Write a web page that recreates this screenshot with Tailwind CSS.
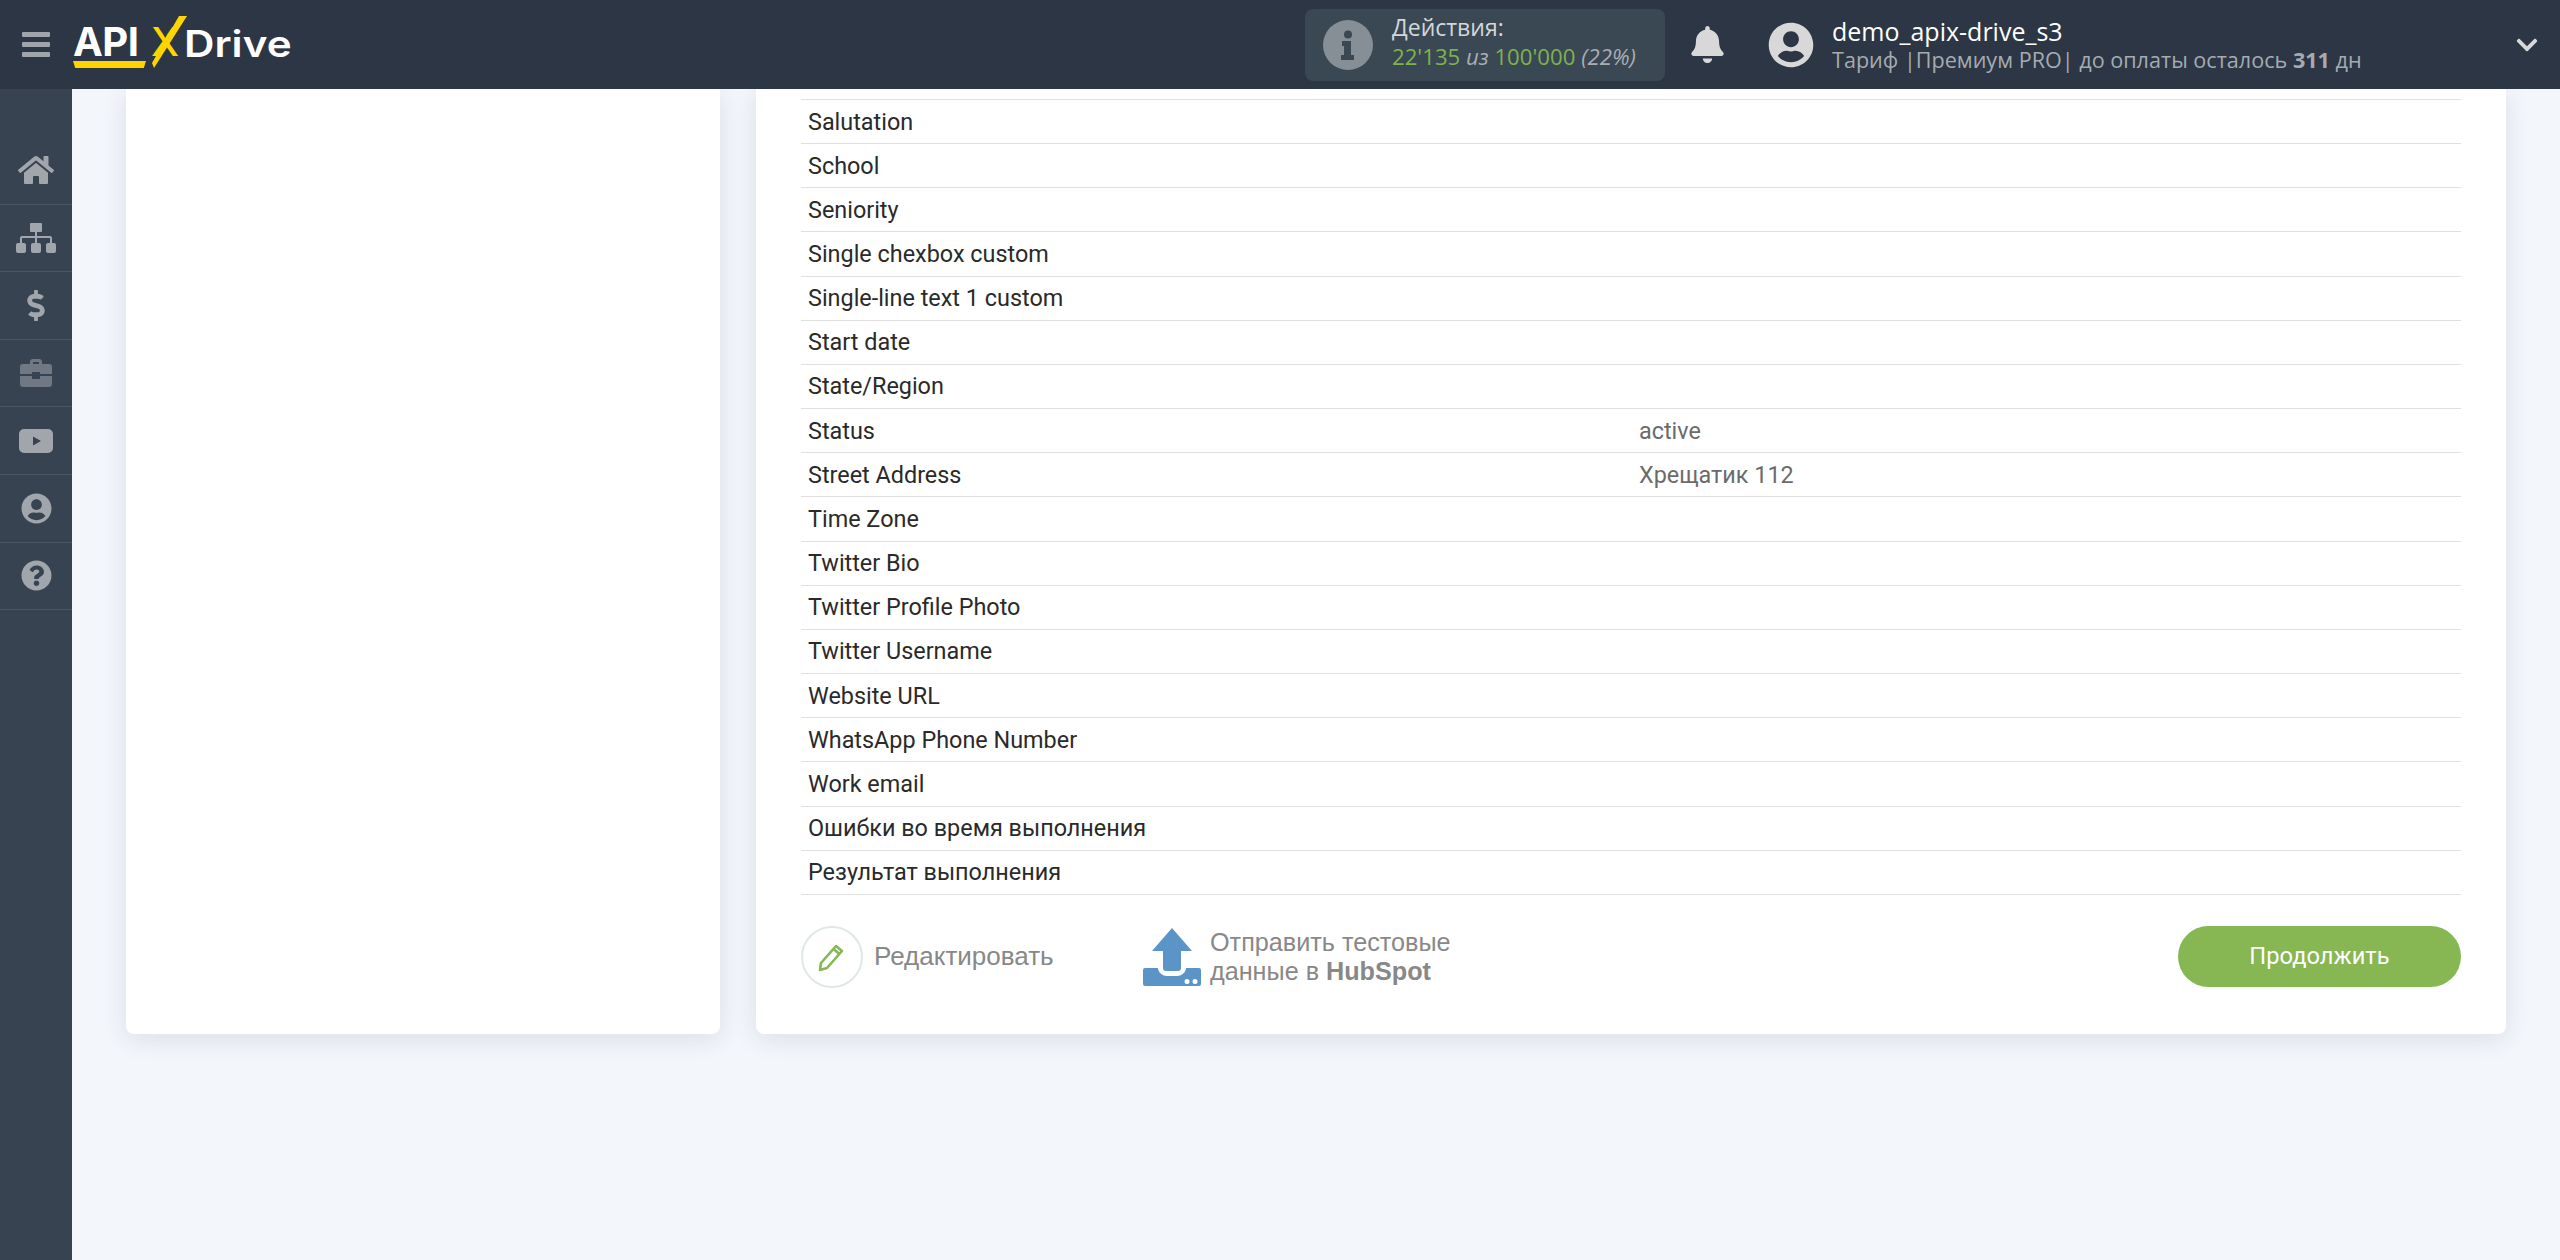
<!DOCTYPE html>
<html lang="en">
<head>
    <meta charset="UTF-8">
    <title>ApiX-Drive</title>
    <script src="https://cdn.jsdelivr.net/npm/@tailwindcss/browser@4"></script>
</head>
<body class="h-screen overflow-hidden flex flex-col bg-[#f3f6fb] font-['Roboto',sans-serif]">
    <!-- Top bar -->
    <header class="h-[89px] shrink-0 bg-[#2c3644] flex items-center relative z-10">
        <div class="w-[73px] shrink-0 pl-[22px] flex flex-col gap-[5px]">
            <span class="block w-[28px] h-[5px] rounded-[1px] bg-[#a0a5ab]"></span>
            <span class="block w-[28px] h-[5px] rounded-[1px] bg-[#a0a5ab]"></span>
            <span class="block w-[28px] h-[5px] rounded-[1px] bg-[#a0a5ab]"></span>
        </div>
        <!-- Logo -->
        <div class="w-[232px] shrink-0 relative h-[89px] font-['Inter',sans-serif] font-bold text-white">
            <span class="absolute left-0 top-[18px] text-[40px] leading-[48px] tracking-[-0.5px]">API</span>
            <span class="absolute left-[78px] top-[18px] text-[40px] leading-[48px] font-medium text-[#ffd400]">X</span>
            <svg class="absolute left-[73px] top-[14px] w-[42px] h-[54px]" viewBox="0 0 42 54" fill="#ffd400"><path d="M33 2h8L8 54l-2-5z"/></svg>
            <span class="absolute left-[111px] top-[22px] text-[37px] leading-[44px] font-semibold origin-left scale-x-[1.14]">Drive</span>
            <span class="absolute left-0 top-[61px] w-[73px] h-[7px] bg-[#ffd400] [clip-path:polygon(0_0,100%_0,97%_100%,3%_100%)]"></span>
        </div>
        <div class="flex-1"></div>
        <!-- Actions counter -->
        <div class="w-[360px] h-[72px] rounded-lg bg-[#3a4854] flex items-center font-['Open_Sans',sans-serif] leading-[29px]">
            <div class="ml-[18px] w-[50px] h-[50px] rounded-full bg-[#868e96] flex items-center justify-center">
                <svg class="w-[14px] h-[30px]" viewBox="0 0 14 30" fill="#3a4854"><circle cx="7" cy="4.5" r="4"/><path d="M1 11h9v14h3v5H0v-5h3v-9H1z"/></svg>
            </div>
            <div class="ml-[19px] pb-[6px]">
                <div class="text-[23px] text-[#d3d7da]">Действия:</div>
                <div class="text-[22.2px] text-[#7fb24d]">22'135 <i class="text-[#a9adb1]">из</i> 100'000 <i class="text-[#a9adb1]">(22%)</i></div>
            </div>
        </div>
        <svg class="w-[33px] h-[37px] ml-[26px]" viewBox="0 0 448 512" fill="#d8d8d8"><path d="M224 512c35.32 0 63.97-28.65 63.97-64H160.03c0 35.35 28.65 64 63.97 64zm215.39-149.71c-19.32-20.76-55.47-51.99-55.47-154.29 0-77.7-54.48-139.9-127.94-155.16V32c0-17.67-14.32-32-31.98-32s-31.98 14.33-31.98 32v20.84C118.56 68.1 64.08 130.3 64.08 208c0 102.3-36.15 133.53-55.47 154.29-6 6.45-8.66 14.16-8.61 21.71.11 16.4 12.98 32 32.1 32h383.8c19.12 0 32-15.6 32.1-32 .05-7.55-2.61-15.27-8.61-21.71z"/></svg>
        <svg class="w-[46px] h-[46px] ml-[44px]" viewBox="0 0 496 512" fill="#d8d8d8"><path d="M248 8C111 8 0 119 0 256s111 248 248 248 248-111 248-248S385 8 248 8zm0 96c48.6 0 88 39.4 88 88s-39.4 88-88 88-88-39.4-88-88 39.4-88 88-88zm0 344c-58.7 0-111.3-26.6-146.5-68.2 18.8-35.4 55.6-59.8 98.5-59.8 2.4 0 4.8.4 7.1 1.1 13 4.2 26.6 6.9 40.9 6.9 14.3 0 28-2.7 40.9-6.9 2.3-.7 4.7-1.1 7.1-1.1 42.9 0 79.7 24.4 98.5 59.8C359.3 421.4 306.7 448 248 448z"/></svg>
        <div class="ml-[18px] w-[728px] shrink-0 font-['Open_Sans',sans-serif]">
            <div class="text-[25px] leading-[29px] mb-[2px] text-white">demo_apix-drive_s3</div>
            <div class="text-[21.6px] leading-[24px] text-[#a5abb1]">Тариф |Премиум PRO| до оплаты осталось <b>311</b> дн</div>
        </div>
        <svg class="absolute right-[21px] top-[33px] w-[24px] h-[24px]" viewBox="0 0 448 512" fill="#d8d8d8"><path d="M207.029 381.476L12.686 187.132c-9.373-9.373-9.373-24.569 0-33.941l22.667-22.667c9.357-9.357 24.522-9.375 33.901-.04L224 284.505l154.745-154.021c9.379-9.335 24.544-9.317 33.901.04l22.667 22.667c9.373 9.373 9.373 24.569 0 33.941L240.971 381.476c-9.373 9.372-24.569 9.372-33.942 0z"/></svg>
    </header>

    <div class="flex-1 flex min-h-0">
        <!-- Sidebar -->
        <nav class="w-[72px] shrink-0 bg-[#374351] pt-[48px]">
            <div class="h-[67.6px] border-b border-[#4a5563] flex items-center justify-center">
                <svg class="w-[36px] h-[32px]" viewBox="0 0 576 512" fill="#a0a6ac"><path d="M280.37 148.26L96 300.11V464a16 16 0 0 0 16 16l112.06-.29a16 16 0 0 0 15.92-16V368a16 16 0 0 1 16-16h64a16 16 0 0 1 16 16v95.64a16 16 0 0 0 16 16.05L464 480a16 16 0 0 0 16-16V300L295.67 148.26a12.19 12.19 0 0 0-15.3 0zM571.6 251.47L488 182.56V44.05a12 12 0 0 0-12-12h-56a12 12 0 0 0-12 12v72.61L318.47 43a48 48 0 0 0-61 0L4.34 251.47a12 12 0 0 0-1.6 16.9l25.5 31A12 12 0 0 0 45.15 301l235.22-193.74a12.19 12.19 0 0 1 15.3 0L530.9 301a12 12 0 0 0 16.9-1.6l25.5-31a12 12 0 0 0-1.7-16.93z"/></svg>
            </div>
            <div class="h-[67.6px] border-b border-[#4a5563] flex items-center justify-center">
                <svg class="w-[40px] h-[30px]" viewBox="0 0 40 30" fill="#a0a6ac"><rect x="14" y="0" width="12" height="9" rx="1"/><rect x="0" y="20" width="10" height="10" rx="2"/><rect x="15" y="20" width="10" height="10" rx="2"/><rect x="30" y="20" width="10" height="10" rx="2"/><path d="M19 9h2v4h13a2 2 0 0 1 2 2v5h-2v-5H21v5h-2v-5H6v5H4v-5a2 2 0 0 1 2-2h13z"/></svg>
            </div>
            <div class="h-[67.6px] border-b border-[#4a5563] flex items-center justify-center">
                <svg class="w-[18px] h-[31px]" viewBox="0 0 288 512" fill="#a0a6ac"><path d="M209.2 233.4l-108-31.6C88.7 198.2 80 186.5 80 173.5c0-16.3 13.2-29.5 29.5-29.5h66.3c12.2 0 24.2 3.7 34.2 10.5 6.1 4.1 14.3 3.1 19.5-2l34.8-34c7.1-6.9 6.1-18.4-1.8-24.5C238 74.8 207.4 64.1 176 64V16c0-8.8-7.2-16-16-16h-32c-8.8 0-16 7.2-16 16v48h-2.5C45.8 64-5.4 118.7.5 183.6c4.2 46.1 39.4 83.6 83.8 96.6l102.5 30c12.5 3.7 21.2 15.3 21.2 28.3 0 16.3-13.2 29.5-29.5 29.5h-66.3C100 368 88 364.3 78 357.5c-6.1-4.1-14.3-3.1-19.5 2l-34.8 34c-7.1 6.9-6.1 18.4 1.8 24.5 24.5 19.2 55.1 29.9 86.5 30v48c0 8.8 7.2 16 16 16h32c8.8 0 16-7.2 16-16v-48.2c46.6-.9 90.3-28.6 105.7-72.7 21.5-61.6-14.6-124.8-72.5-141.7z"/></svg>
            </div>
            <div class="h-[67.6px] border-b border-[#4a5563] flex items-center justify-center">
                <svg class="w-[32px] h-[28px]" viewBox="0 0 32 28" fill="#6f7883"><path d="M10 5V3a3 3 0 0 1 3-3h6a3 3 0 0 1 3 3v2h7a3 3 0 0 1 3 3v7H20v-2h-8v2H0V8a3 3 0 0 1 3-3zm3 0h6V3h-6z"/><path d="M0 17h12v3h8v-3h12v8a3 3 0 0 1-3 3H3a3 3 0 0 1-3-3z"/></svg>
            </div>
            <div class="h-[67.6px] border-b border-[#4a5563] flex items-center justify-center">
                <svg class="w-[34px] h-[24px]" viewBox="0 0 34 24" fill="#a0a6ac"><path fill-rule="evenodd" d="M5 0h24a5 5 0 0 1 5 5v14a5 5 0 0 1-5 5H5a5 5 0 0 1-5-5V5a5 5 0 0 1 5-5zm9 7.500v9l8-4.500z"/></svg>
            </div>
            <div class="h-[67.6px] border-b border-[#4a5563] flex items-center justify-center">
                <svg class="w-[31px] h-[31px]" viewBox="0 0 496 512" fill="#a0a6ac"><path d="M248 8C111 8 0 119 0 256s111 248 248 248 248-111 248-248S385 8 248 8zm0 96c48.6 0 88 39.4 88 88s-39.4 88-88 88-88-39.4-88-88 39.4-88 88-88zm0 344c-58.7 0-111.3-26.6-146.5-68.2 18.8-35.4 55.6-59.8 98.5-59.8 2.4 0 4.8.4 7.1 1.1 13 4.2 26.6 6.9 40.9 6.9 14.3 0 28-2.7 40.9-6.9 2.3-.7 4.7-1.1 7.1-1.1 42.9 0 79.7 24.4 98.5 59.8C359.3 421.4 306.7 448 248 448z"/></svg>
            </div>
            <div class="h-[67.6px] border-b border-[#4a5563] flex items-center justify-center">
                <svg class="w-[31px] h-[31px]" viewBox="0 0 512 512" fill="#a0a6ac"><path d="M504 256c0 136.997-111.043 248-248 248S8 392.997 8 256C8 119.083 119.043 8 256 8s248 111.083 248 248zM262.655 90c-54.497 0-89.255 22.957-116.549 63.758-3.536 5.286-2.353 12.415 2.715 16.258l34.699 26.31c5.205 3.947 12.621 3.008 16.665-2.122 17.864-22.658 30.113-35.797 57.303-35.797 20.429 0 45.698 13.148 45.698 32.958 0 14.976-12.363 22.667-32.534 33.976C247.128 238.528 216 254.941 216 296v4c0 6.627 5.373 12 12 12h56c6.627 0 12-5.373 12-12v-1.333c0-28.462 83.186-29.647 83.186-106.667 0-58.002-60.165-102-116.531-102zM256 338c-25.365 0-46 20.635-46 46 0 25.364 20.635 46 46 46s46-20.636 46-46c0-25.365-20.635-46-46-46z"/></svg>
            </div>
        </nav>

        <!-- Content -->
        <main class="flex-1 flex items-start gap-[36px] px-[54px]">
            <section class="w-[594px] shrink-0 h-[945px] bg-white rounded-b-lg shadow-[0_5px_25px_rgba(40,60,90,0.12)]"></section>
            <section class="flex-1 h-[945px] bg-white rounded-b-lg shadow-[0_5px_25px_rgba(40,60,90,0.12)] pt-[10px] px-[45px]">
                <div class="border-t border-[#e0e0e0] text-[23.4px] text-[#2a2a2a]">
                    <div class="h-[44.17px] border-b border-[#e0e0e0] flex items-center pl-[7px] pt-[1px]">Salutation</div>
                    <div class="h-[44.17px] border-b border-[#e0e0e0] flex items-center pl-[7px] pt-[1px]">School</div>
                    <div class="h-[44.17px] border-b border-[#e0e0e0] flex items-center pl-[7px] pt-[1px]">Seniority</div>
                    <div class="h-[44.17px] border-b border-[#e0e0e0] flex items-center pl-[7px] pt-[1px]">Single chexbox custom</div>
                    <div class="h-[44.17px] border-b border-[#e0e0e0] flex items-center pl-[7px] pt-[1px]">Single-line text 1 custom</div>
                    <div class="h-[44.17px] border-b border-[#e0e0e0] flex items-center pl-[7px] pt-[1px]">Start date</div>
                    <div class="h-[44.17px] border-b border-[#e0e0e0] flex items-center pl-[7px] pt-[1px]">State/Region</div>
                    <div class="h-[44.17px] border-b border-[#e0e0e0] flex items-center pl-[7px] pt-[1px]"><span class="w-[831px]">Status</span><span class="text-[#6b6b6b]">active</span></div>
                    <div class="h-[44.17px] border-b border-[#e0e0e0] flex items-center pl-[7px] pt-[1px]"><span class="w-[831px]">Street Address</span><span class="text-[#6b6b6b]">Хрещатик 112</span></div>
                    <div class="h-[44.17px] border-b border-[#e0e0e0] flex items-center pl-[7px] pt-[1px]">Time Zone</div>
                    <div class="h-[44.17px] border-b border-[#e0e0e0] flex items-center pl-[7px] pt-[1px]">Twitter Bio</div>
                    <div class="h-[44.17px] border-b border-[#e0e0e0] flex items-center pl-[7px] pt-[1px]">Twitter Profile Photo</div>
                    <div class="h-[44.17px] border-b border-[#e0e0e0] flex items-center pl-[7px] pt-[1px]">Twitter Username</div>
                    <div class="h-[44.17px] border-b border-[#e0e0e0] flex items-center pl-[7px] pt-[1px]">Website URL</div>
                    <div class="h-[44.17px] border-b border-[#e0e0e0] flex items-center pl-[7px] pt-[1px]">WhatsApp Phone Number</div>
                    <div class="h-[44.17px] border-b border-[#e0e0e0] flex items-center pl-[7px] pt-[1px]">Work email</div>
                    <div class="h-[44.17px] border-b border-[#e0e0e0] flex items-center pl-[7px] pt-[1px]">Ошибки во время выполнения</div>
                    <div class="h-[44.17px] border-b border-[#e0e0e0] flex items-center pl-[7px] pt-[1px]">Результат выполнения</div>
                </div>
                <div class="mt-[31px] flex items-center text-[#888888] font-['Liberation_Sans',sans-serif]">
                    <div class="w-[62px] h-[62px] shrink-0 rounded-full border-2 border-[#dfe8e6] flex items-center justify-center">
                        <svg class="w-[28px] h-[30px]" viewBox="0 0 28 30" fill="none" stroke="#86b752" stroke-width="2.6" stroke-linejoin="round"><path d="M3 21L18 4l6 5L9 26l-7 2z"/><path d="M15.5 7l6 5"/></svg>
                    </div>
                    <span class="ml-[11px] text-[26px] w-[269px] shrink-0">Редактировать</span>
                    <svg class="w-[58px] h-[58px] shrink-0" viewBox="0 0 58 58" fill="#5b94c6"><path d="M29 0l20 23H38v17a3 3 0 0 1-3 3H23a3 3 0 0 1-3-3V23H9z"/><path fill-rule="evenodd" d="M2 40h13v1a9 9 0 0 0 9 7h10a9 9 0 0 0 9-7v-1h13a2 2 0 0 1 2 2v14a2 2 0 0 1-2 2H2a2 2 0 0 1-2-2V42a2 2 0 0 1 2-2zm42 11a2.500 2.500 0 1 0 0 5 2.500 2.500 0 0 0 0-5zm8 0a2.500 2.500 0 1 0 0 5 2.500 2.500 0 0 0 0-5z"/></svg>
                    <div class="ml-[9px] text-[25.2px] leading-[29px] w-[968px] shrink-0">
                        Отправить тестовые<br>данные в <b>HubSpot</b>
                    </div>
                    <div class="w-[283px] h-[61px] rounded-full bg-[#86b752] text-white text-[23.7px] font-['Roboto',sans-serif] flex items-center justify-center">Продолжить</div>
                </div>
            </section>
        </main>
    </div>
</body>
</html>
